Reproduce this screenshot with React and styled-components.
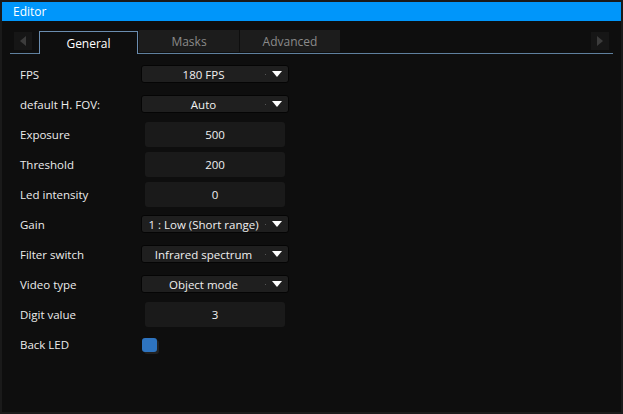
import React from 'react';
import styled, { createGlobalStyle } from 'styled-components';

const Global = createGlobalStyle`
  html, body { margin: 0; padding: 0; background: #0e0e0e; }
  body { font-family: "Open Sans", "Noto Sans", sans-serif; }
`;

const Frame = styled.div`
  width: 623px;
  height: 414px;
  box-sizing: border-box;
  border: 2px solid #1a1a1a;
  background: #0e0e0e;
  display: flex;
  flex-direction: column;
`;

const TitleBar = styled.div`
  height: 19px;
  background: #0096fa;
  color: #ffffff;
  font-size: 12px;
  line-height: 19px;
  padding-left: 11px;
`;

const TabBar = styled.div`
  margin: 9px 8px 0 8px;
  height: 23px;
  border-bottom: 1px solid #5f809e;
  display: flex;
  align-items: flex-start;
`;

const Arrow = styled.div`
  width: 18px;
  height: 18px;
  margin-top: 2px;
  margin-left: ${p => p.left ? '4px' : 'auto'};
  margin-right: ${p => p.left ? '7px' : '4px'};
  background: #161616;
  display: flex;
  align-items: center;
  justify-content: center;
`;

const Tab = styled.div`
  width: ${p => p.active ? '99px' : '100px'};
  height: ${p => p.active ? '23px' : '22px'};
  margin-right: 1px;
  box-sizing: border-box;
  display: flex;
  align-items: center;
  justify-content: center;
  font-size: 12px;
  color: ${p => p.active ? '#ffffff' : '#8a8a8a'};
  background: ${p => p.active ? '#0e0e0e' : '#1c1c1c'};
  border: ${p => p.active ? '1px solid #6b8db0' : 'none'};
  border-bottom: none;
  position: relative;
  top: ${p => p.active ? '1px' : '0'};
  z-index: ${p => p.active ? 1 : 0};
`;

const Form = styled.div`
  padding: 5px 0 0 18px;
  display: flex;
  flex-direction: column;
`;

const Row = styled.div`
  height: 30px;
  display: flex;
  align-items: center;
`;

const Label = styled.div`
  width: 121px;
  font-size: 11.5px;
  color: #ececec;
`;

const Select = styled.div`
  width: 148px;
  height: 18px;
  box-sizing: border-box;
  background: #1f1f1f;
  border: 1px solid #050505;
  border-radius: 3px;
  display: flex;
  align-items: center;
  color: #f0f0f0;
  font-size: 11.5px;
`;

const SelectText = styled.div`
  flex: 1;
  text-align: center;
  white-space: nowrap;
  overflow: hidden;
`;

const Dot = styled.div`
  width: 1px;
  height: 1px;
  background: #555;
  margin-right: 6px;
`;

const Caret = styled.div`
  width: 0;
  height: 0;
  border-left: 5px solid transparent;
  border-right: 5px solid transparent;
  border-top: 6px solid #ffffff;
  margin-right: 6px;
`;

const Input = styled.div`
  width: 140px;
  height: 25px;
  margin-left: 4px;
  background: #1a1a1a;
  border-radius: 3px;
  display: flex;
  align-items: center;
  justify-content: center;
  color: #f0f0f0;
  font-size: 11.5px;
`;

const Check = styled.div`
  width: 15px;
  height: 14px;
  margin-left: 1px;
  margin-top: 2px;
  background: #2e74c0;
  border-radius: 3px;
  box-shadow: 2px 2px 0 #222222;
`;

const rows = [
  { label: 'FPS', type: 'select', value: '180 FPS' },
  { label: 'default H. FOV:', type: 'select', value: 'Auto' },
  { label: 'Exposure', type: 'input', value: '500' },
  { label: 'Threshold', type: 'input', value: '200' },
  { label: 'Led intensity', type: 'input', value: '0' },
  { label: 'Gain', type: 'select', value: '1 : Low (Short range)' },
  { label: 'Filter switch', type: 'select', value: 'Infrared spectrum' },
  { label: 'Video type', type: 'select', value: 'Object mode' },
  { label: 'Digit value', type: 'input', value: '3' },
  { label: 'Back LED', type: 'check' },
];

const Control = ({ type, value }) => {
  if (type === 'select') {
    return (
      <Select>
        <SelectText>{value}</SelectText>
        <Dot />
        <Caret />
      </Select>
    );
  }
  if (type === 'input') return <Input>{value}</Input>;
  return <Check />;
};

const App = () => (
  <>
    <Global />
    <Frame>
      <TitleBar>Editor</TitleBar>
      <TabBar>
        <Arrow left>
          <svg width="6" height="10" viewBox="0 0 6 10"><path d="M6 0 L0 5 L6 10 Z" fill="#3c3c3c" /></svg>
        </Arrow>
        <Tab active>General</Tab>
        <Tab>Masks</Tab>
        <Tab>Advanced</Tab>
        <Arrow>
          <svg width="6" height="10" viewBox="0 0 6 10"><path d="M0 0 L6 5 L0 10 Z" fill="#3c3c3c" /></svg>
        </Arrow>
      </TabBar>
      <Form>
        {rows.map(r => (
          <Row key={r.label}>
            <Label>{r.label}</Label>
            <Control type={r.type} value={r.value} />
          </Row>
        ))}
      </Form>
    </Frame>
  </>
);

export default App;
